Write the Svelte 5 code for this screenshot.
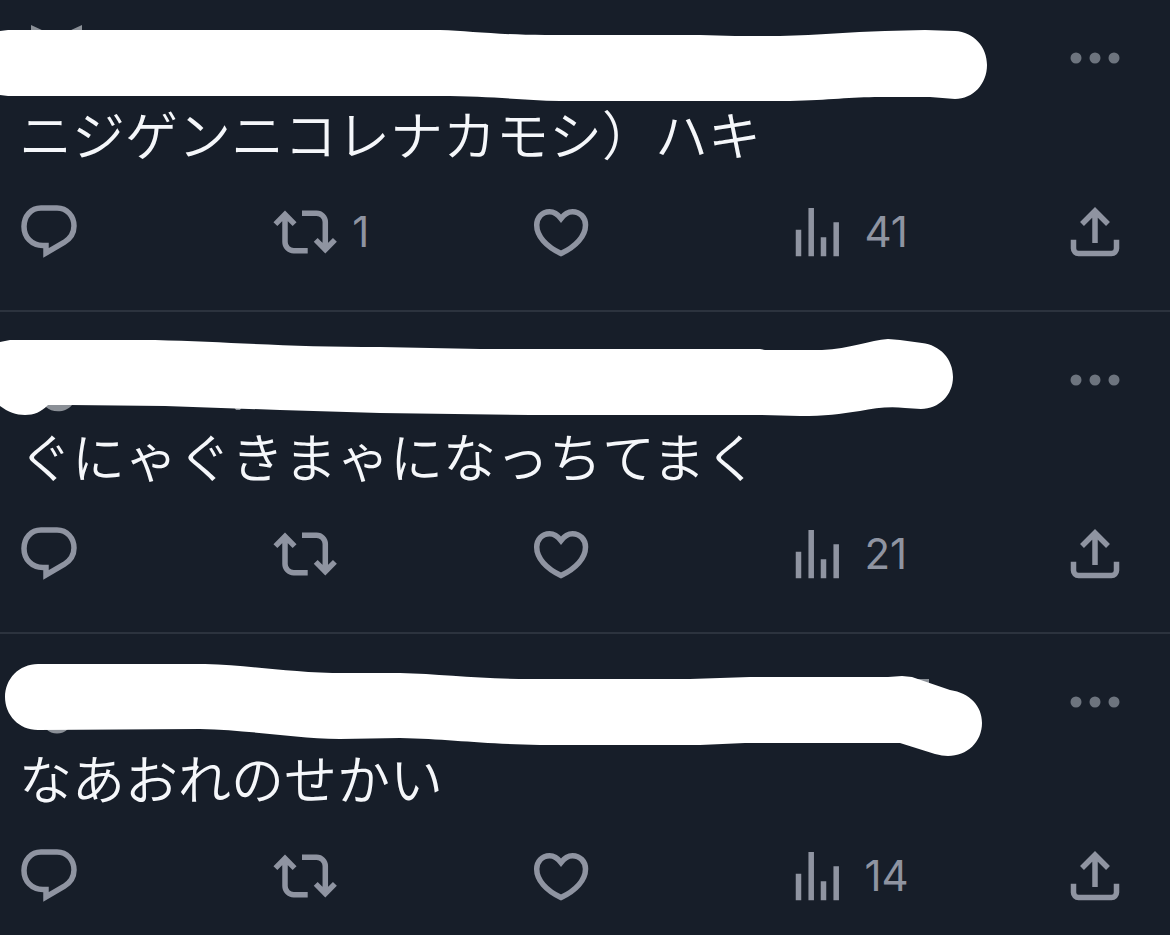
<script lang="ts">
	interface Post {
		text: string;
		retweets?: number;
		views: number;
		mask: string;
		peek: string;
	}

	// mask: brush stroke hiding the author line, peek: what sticks out from under it
	const posts: Post[] = [
		{
			text: 'ニジゲンニコレナカモシ）ハキ',
			retweets: 1,
			views: 41,
			mask: 'M0 21 L8 20 H440 C470 21 500 25 545 25 H700 L735 26 H780 C820 25 850 22 885 21 L925 20 L955 21 C974 22 987 37 987 55 C987 74 973 89 955 89 L930 87 H880 C850 87 830 90 790 91 H560 C520 90 490 86 440 86 H8 L0 85 Z',
			peek: 'M31 15 L44 21 H31 Z M82 15 V21 H69 Z'
		},
		{
			text: 'ぐにゃぐきまゃになっちてまく',
			views: 21,
			mask: 'M0 10 L10 8 H155 C230 10 290 15 380 15 L480 17 H760 L765 18 H822 C850 17 870 8 888 7 L900 8 L922 11 C940 13 953 27 953 45 C953 63 939 77 921 77 L905 76 C890 74 875 76 860 79 C840 82 825 84 800 84 L760 83 H530 L380 81 L280 78 L165 74 L70 73 H48 C41 80 34 83 25 83 C16 83 8 80 0 74 Z',
			peek: 'M46 73 H72 C66 81 52 81 46 75 Z M234 75 H242 L240 78 H236 Z'
		},
		{
			text: 'なあおれのせかい',
			views: 14,
			mask: 'M38 10 H205 C250 11 290 19 345 19 H400 C440 20 480 25 530 25 H690 L750 23 H888 L902 22 L912 23 L950 36 C970 39 982 52 982 69 C982 88 967 102 948 102 C944 102 940 101 935 100 L900 89 H745 L700 91 H540 C480 90 450 85 400 84 L340 85 C290 84 250 76 200 75 L38 76 C19 76 5 61 5 43 C5 25 19 10 38 10 Z',
			peek: 'M46 75 H68 C62 81 52 81 46 75 Z M914 25 H929 V30 H914 Z'
		}
	];
</script>

<main class="feed">
	{#each posts as post}
		<article class="post">
			<header class="post-header">
				<svg class="author" viewBox="0 0 1000 96" aria-hidden="true">
					<path class="peek" d={post.peek} />
					<path class="mask" d={post.mask} />
				</svg>
				<button type="button" class="more" aria-label="More">
					<svg class="icon" viewBox="0 0 64 64">
						<circle cx="13" cy="32" r="5.5" />
						<circle cx="32" cy="32" r="5.5" />
						<circle cx="51" cy="32" r="5.5" />
					</svg>
				</button>
			</header>

			<p class="text" lang="ja">{post.text}</p>

			<div class="actions">
				<button type="button" aria-label="Reply">
					<svg class="icon line" viewBox="0 0 64 64">
						<path
							d="M24 8H40C50 8 57 16 57 26C57 33.500 53.500 38.500 47 42.500L29 53V45.500H26C14.500 45.500 7 37 7 26.500C7 16 14 8 24 8Z"
						/>
					</svg>
				</button>
				<button type="button" aria-label="Retweet">
					<svg class="icon line" viewBox="0 0 64 64">
						<path d="M2.400 24.100L12 14.500L21.600 24.100M12 14.500V42a8.700 8.700 0 0 0 8.700 8.700H34.700" />
						<path d="M61.900 39.900L52.300 49.500L42.700 39.900M52.300 49.500V22a8.700 8.700 0 0 0-8.700-8.700H29" />
					</svg>
					{#if post.retweets}
						<span class="count">{post.retweets}</span>
					{/if}
				</button>
				<button type="button" aria-label="Like">
					<svg class="icon line" viewBox="0 0 64 64">
						<path
							d="M32 18.500C28.500 13.800 25 11.700 20.500 11.700C13 11.700 7.700 17.500 7.700 25C7.700 36 17 46.500 32 53.500C47 46.500 56.500 36 56.500 25C56.500 17.500 51 11.700 43.500 11.700C39 11.700 35.500 13.800 32 18.500Z"
						/>
					</svg>
				</button>
				<button type="button" aria-label="Views">
					<svg class="icon line" viewBox="0 0 64 64">
						<path d="M13.500 56.300V29.700M26.200 56.300V8M38.500 56.300V37.300M51.200 56.300V22.300" />
					</svg>
					<span class="count">{post.views}</span>
				</button>
				<button type="button" aria-label="Share">
					<svg class="icon line" viewBox="0 0 64 64">
						<path d="M19 24L32 11L45 24M32 11V43" />
						<path d="M10.500 39.700V48.500a5 5 0 0 0 5 5H48.500a5 5 0 0 0 5-5V39.700" />
					</svg>
				</button>
			</div>
		</article>
	{/each}
</main>

<style>
	:global(body) {
		margin: 0;
		background: #171e29;
	}

	.feed {
		height: 100vh;
		overflow: hidden;
		background: #171e29;
		color: #f5f7fa;
		font-family: 'Noto Sans CJK JP', sans-serif;
	}

	.post {
		padding-bottom: 46px;
		border-bottom: 2px solid #2c333e;
	}

	/* the feed is scrolled a little past the top of the first post */
	.post:first-child {
		margin-top: -10px;
	}

	.post-header {
		display: flex;
		align-items: center;
		justify-content: space-between;
		height: 96px;
		padding: 20px 43px 0 0;
	}

	.author {
		flex: 0 0 1000px;
		height: 96px;
		overflow: visible;
	}

	.mask {
		fill: #fff;
	}

	.peek {
		fill: #8b9097;
	}

	button {
		display: flex;
		align-items: center;
		gap: 15px;
		padding: 0;
		border: 0;
		background: none;
		color: #8f94a1;
		cursor: pointer;
	}

	.more {
		color: #6d747e;
	}

	.icon {
		flex: none;
		width: 64px;
		height: 64px;
		fill: currentColor;
	}

	.line {
		fill: none;
		stroke: currentColor;
		stroke-width: 5.5;
	}

	.text {
		margin: 0 0 40px;
		padding: 0 19px;
		font-size: 53px;
		font-weight: 350;
		line-height: 54px;
	}

	.actions {
		display: grid;
		grid-template-columns: repeat(3, 12fr) 13fr 64px;
		padding: 0 43px 0 17px;
	}

	.count {
		font-family: Inter, sans-serif;
		font-size: 42px;
		line-height: 64px;
	}
</style>
